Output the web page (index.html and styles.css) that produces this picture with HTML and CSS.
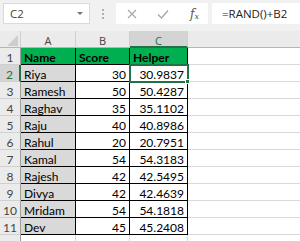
FILE: index.html
```html
<!DOCTYPE html>
<html>
<head>
<meta charset="utf-8">
<link rel="stylesheet" href="styles.css">
</head>
<body>
<div class="fbar">
  <div class="namebox"><span class="ref">C2</span><span class="caret"></span></div>
  <div class="grip"><i></i><i></i><i></i></div>
  <div class="btns">
    <svg class="ico" width="10" height="10" viewBox="0 0 10 10"><path d="M1 1 L9 9 M9 1 L1 9" stroke="#a8a8a8" stroke-width="1.2" fill="none"/></svg>
    <svg class="ico" width="12" height="10" viewBox="0 0 12 10"><path d="M1 5.5 L4.5 9 L11 1.5" stroke="#a8a8a8" stroke-width="1.4" fill="none"/></svg>
    <span class="fx">f<sub>x</sub></span>
  </div>
  <div class="formula">=RAND()+B2</div>
</div>
<div class="sheet">
  <div class="corner"><span class="tri"></span></div>
  <div class="ch">A</div>
  <div class="ch">B</div>
  <div class="ch sel">C</div>
  <div class="ch rest"></div>

  <div class="rh">1</div>
  <div class="c hd">Name</div>
  <div class="c hd">Score</div>
  <div class="c hd last">Helper</div>
  <div class="g"></div>

  <div class="rh selr">2</div>
  <div class="c nm">Riya</div>
  <div class="c num">30</div>
  <div class="c num last active">30.9837</div>
  <div class="g"></div>

  <div class="rh">3</div>
  <div class="c nm">Ramesh</div>
  <div class="c num">50</div>
  <div class="c num last">50.4287</div>
  <div class="g"></div>

  <div class="rh">4</div>
  <div class="c nm">Raghav</div>
  <div class="c num">35</div>
  <div class="c num last">35.1102</div>
  <div class="g"></div>

  <div class="rh">5</div>
  <div class="c nm">Raju</div>
  <div class="c num">40</div>
  <div class="c num last">40.8986</div>
  <div class="g"></div>

  <div class="rh">6</div>
  <div class="c nm">Rahul</div>
  <div class="c num">20</div>
  <div class="c num last">20.7951</div>
  <div class="g"></div>

  <div class="rh">7</div>
  <div class="c nm">Kamal</div>
  <div class="c num">54</div>
  <div class="c num last">54.3183</div>
  <div class="g"></div>

  <div class="rh">8</div>
  <div class="c nm">Rajesh</div>
  <div class="c num">42</div>
  <div class="c num last">42.5495</div>
  <div class="g"></div>

  <div class="rh">9</div>
  <div class="c nm">Divya</div>
  <div class="c num">42</div>
  <div class="c num last">42.4639</div>
  <div class="g"></div>

  <div class="rh">10</div>
  <div class="c nm">Mridam</div>
  <div class="c num">54</div>
  <div class="c num last">54.1818</div>
  <div class="g"></div>

  <div class="rh">11</div>
  <div class="c nm">Dev</div>
  <div class="c num">45</div>
  <div class="c num last">45.2408</div>
  <div class="g"></div>

  <div class="rh"></div>
  <div class="e"></div>
  <div class="e"></div>
  <div class="e"></div>
  <div class="g"></div>
</div>
</body>
</html>
```
FILE: styles.css
```css
html, body {
  margin: 0;
  padding: 0;
  background: #ffffff;
}
body {
  width: 300px;
  height: 241px;
  overflow: hidden;
  font-family: "Lato", "Liberation Sans", sans-serif;
}
.fbar {
  height: 31px;
  background: #f1f1f1;
  display: flex;
  align-items: flex-start;
  padding: 3px 0 0 3px;
  box-sizing: border-box;
}
.namebox {
  width: 87px;
  height: 21px;
  background: #fff;
  border: 1px solid #dadada;
  box-sizing: border-box;
  display: flex;
  align-items: center;
  padding-left: 6px;
  font-family: "Open Sans", "Liberation Sans", sans-serif;
  font-size: 11.5px;
  color: #444;
}
.ref { flex: 1; }
.caret {
  width: 0;
  height: 0;
  border-left: 3px solid transparent;
  border-right: 3px solid transparent;
  border-top: 3.5px solid #777;
  margin-right: 6px;
}
.grip {
  width: 26px;
  height: 21px;
  display: flex;
  flex-direction: column;
  align-items: center;
  justify-content: center;
  gap: 2px;
}
.grip i {
  display: block;
  width: 2px;
  height: 2px;
  background: #b0b0b0;
}
.btns {
  width: 92px;
  height: 21px;
  background: #fff;
  display: flex;
  align-items: center;
  padding-left: 11px;
  box-sizing: border-box;
  gap: 20px;
}
.ico { display: block; }
.fx {
  font-family: "DejaVu Serif", "Liberation Serif", serif;
  font-style: italic;
  font-size: 12px;
  color: #555;
  margin-left: 1px;
}
.fx sub { font-size: 8px; vertical-align: -1px; }
.formula {
  margin-left: 4px;
  flex: 1;
  height: 21px;
  background: #fff;
  display: flex;
  align-items: center;
  padding-left: 10px;
  font-family: "Open Sans", "Liberation Sans", sans-serif;
  font-size: 11.5px;
  color: #222;
}
.sheet {
  display: grid;
  grid-template-columns: 21px 55px 54px 58px 1fr;
  grid-auto-rows: 17px;
  font-size: 12px;
}
.sheet > div {
  box-sizing: border-box;
  line-height: 17px;
  white-space: nowrap;
  overflow: visible;
}
.corner {
  background: #ebebeb;
  border-right: 1px solid #cfcfcf;
  border-bottom: 1px solid #b5b5b5;
  position: relative;
}
.tri {
  position: absolute;
  right: 2px;
  bottom: 1px;
  width: 0;
  height: 0;
  border-left: 11px solid transparent;
  border-bottom: 11px solid #cdcdcd;
}
.ch {
  background: #ebebeb;
  border-right: 1px solid #cfcfcf;
  border-bottom: 1px solid #b5b5b5;
  text-align: center;
  color: #444;
  font-family: "Open Sans", "Liberation Sans", sans-serif;
  font-size: 11px;
  padding-top: 1px;
}
.ch.sel {
  background: #d4d4d4;
  color: #217346;
  border-bottom: 2px solid #217346;
}
.ch.rest { border-right: none; }
.rh {
  background: #ebebeb;
  border-right: 1px solid #9e9e9e;
  border-bottom: 1px solid #d0d0d0;
  text-align: center;
  color: #444;
  font-size: 12px;
  padding-top: 1px;
}
.rh.selr {
  background: #d4d4d4;
  color: #217346;
  border-right: 2px solid #217346;
}
.c {
  border-right: 1px solid #000;
  border-bottom: 1px solid #000;
  padding: 1px 3px 0 3px;
  color: #000;
}
.c.hd {
  background: #00b050;
  font-weight: bold;
}
.c.nm { background: #d9d9d9; }
.c.num { text-align: right; background: #fff; }
.c.last { border-right: 1px solid #000; }
.c.active {
  position: relative;
  outline: 2px solid #217346;
  outline-offset: -1px;
}
.c.active::after {
  content: "";
  position: absolute;
  right: -3px;
  bottom: -3px;
  width: 5px;
  height: 5px;
  background: #217346;
  border: 1px solid #fff;
  box-sizing: border-box;
  z-index: 2;
}
.g {
  border-bottom: 1px solid #d9d9d9;
}
.e {
  border-right: 1px solid #d9d9d9;
}
```
